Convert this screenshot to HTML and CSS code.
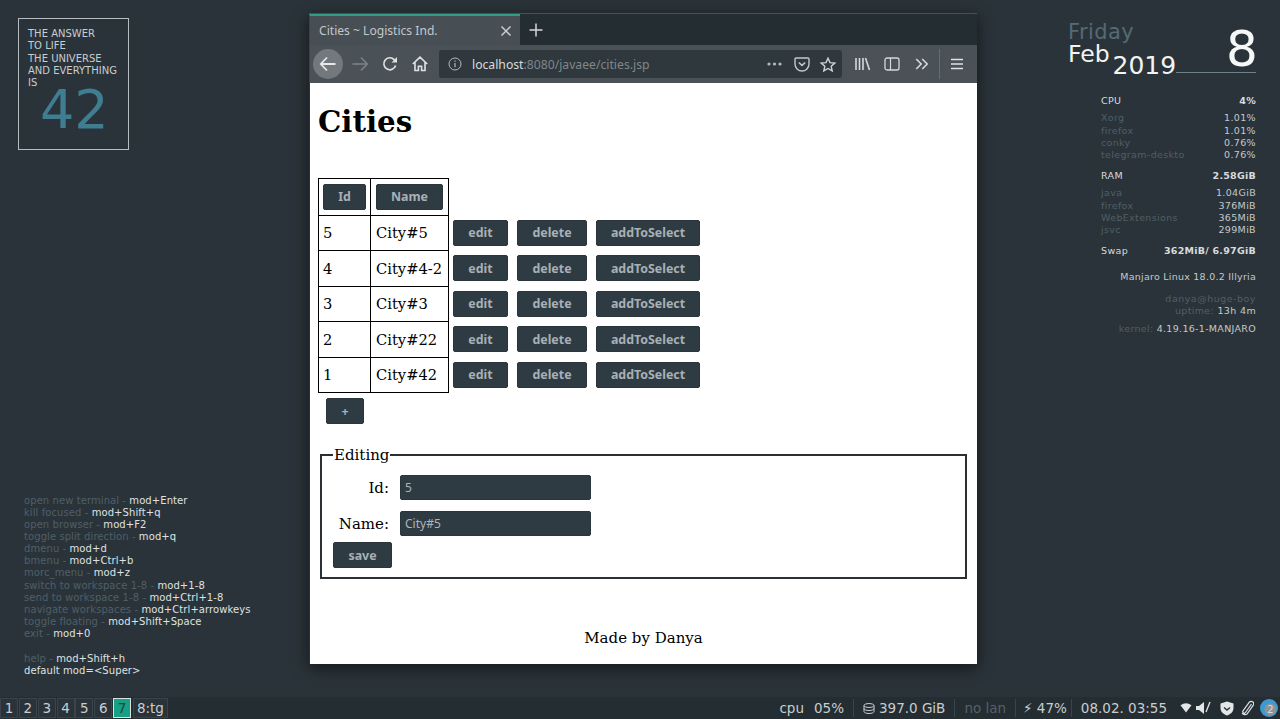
FILE: index.html
```html
<!doctype html>
<html>
<head>
<meta charset="utf-8">
<title>Cities ~ Logistics Ind.</title>
<link rel="stylesheet" href="styles.css">
</head>
<body>
<div class="answer">
	<div>THE ANSWER</div>
	<div>TO LIFE</div>
	<div>THE UNIVERSE</div>
	<div>AND EVERYTHING</div>
	<div>IS</div>
	<div class="answer-num">42</div>
</div>

<div class="keys">
	<div><span class="dim">open new terminal - </span>mod+Enter</div>
	<div><span class="dim">kill focused - </span>mod+Shift+q</div>
	<div><span class="dim">open browser - </span>mod+F2</div>
	<div><span class="dim">toggle split direction - </span>mod+q</div>
	<div><span class="dim">dmenu - </span>mod+d</div>
	<div><span class="dim">bmenu - </span>mod+Ctrl+b</div>
	<div><span class="dim">morc_menu - </span>mod+z</div>
	<div><span class="dim">switch to workspace 1-8 - </span>mod+1-8</div>
	<div><span class="dim">send to workspace 1-8 - </span>mod+Ctrl+1-8</div>
	<div><span class="dim">navigate workspaces - </span>mod+Ctrl+arrowkeys</div>
	<div><span class="dim">toggle floating - </span>mod+Shift+Space</div>
	<div><span class="dim">exit - </span>mod+0</div>
	<div class="keys-gap"><span class="dim">help - </span>mod+Shift+h</div>
	<div>default mod=&lt;Super&gt;</div>
</div>

<div class="window">
	<div class="tabbar">
		<div class="tab">
			<span class="tab-title">Cities ~ Logistics Ind.</span>
			<svg class="tab-close" width="12" height="12" viewBox="0 0 12 12"><path d="M1.5 1.5l9 9M10.5 1.5l-9 9" stroke="#c9cdd0" stroke-width="1.5" fill="none"/></svg>
		</div>
		<svg class="tab-new" width="14" height="14" viewBox="0 0 14 14"><path d="M7 0.5v13M0.5 7h13" stroke="#d5d8da" stroke-width="1.5" fill="none"/></svg>
	</div>
	<div class="toolbar">
		<div class="back">
			<svg width="18" height="16" viewBox="0 0 18 16"><path d="M16.5 8H2M8 1.5L1.8 8L8 14.5" stroke="#e6e8e9" stroke-width="1.8" fill="none"/></svg>
		</div>
		<svg class="tool-fwd" width="18" height="16" viewBox="0 0 18 16"><path d="M1.5 8H16M10 1.5L16.2 8L10 14.5" stroke="#7d8387" stroke-width="1.6" fill="none"/></svg>
		<svg class="tool-reload" width="16" height="16" viewBox="0 0 16 16"><path d="M13.6 9.5A6 6 0 1 1 12.2 3.6L14.2 5.4" stroke="#dfe2e3" stroke-width="1.7" fill="none"/><path d="M15 1v5.4H9.6z" fill="#dfe2e3"/></svg>
		<svg class="tool-home" width="16" height="16" viewBox="0 0 16 16"><path d="M0.8 8L8 1.2L15.2 8M3 6.5V14.5H6.4V10.2H9.6V14.5H13V6.5" stroke="#dfe2e3" stroke-width="1.6" fill="none"/></svg>
		<div class="urlbar">
			<svg class="url-info" width="14" height="14" viewBox="0 0 14 14"><circle cx="7" cy="7" r="6" stroke="#b4b9bc" stroke-width="1" fill="none"/><path d="M7 6v4.2M7 3.6v1.2" stroke="#b4b9bc" stroke-width="1.2"/></svg>
			<span class="url-text"><span class="url-host">localhost</span>:8080/javaee/cities.jsp</span>
			<svg class="url-dots" width="15" height="4" viewBox="0 0 15 4"><circle cx="2" cy="2" r="1.6" fill="#b4b9bc"/><circle cx="7.5" cy="2" r="1.6" fill="#b4b9bc"/><circle cx="13" cy="2" r="1.6" fill="#b4b9bc"/></svg>
			<svg class="url-pocket" width="16" height="15" viewBox="0 0 16 15"><path d="M2 1h12a1 1 0 0 1 1 1v5a7 7 0 0 1-14 0V2a1 1 0 0 1 1-1z" stroke="#c4c8ca" stroke-width="1.4" fill="none"/><path d="M4.8 5.5L8 8.4l3.2-2.9" stroke="#c4c8ca" stroke-width="1.6" fill="none"/></svg>
			<svg class="url-star" width="16" height="15" viewBox="0 0 16 15"><path d="M8 1.2l2 4.4 4.8.5-3.6 3.2 1 4.6L8 11.5l-4.2 2.4 1-4.6L1.2 6.1 6 5.6z" stroke="#d0d3d5" stroke-width="1.4" fill="none"/></svg>
		</div>
		<svg class="tool-lib" width="16" height="14" viewBox="0 0 16 14"><path d="M1 1v12M4.5 1v12M8 1v12M10.5 1l4 12" stroke="#d5d8da" stroke-width="1.6" fill="none"/></svg>
		<svg class="tool-side" width="16" height="14" viewBox="0 0 16 14"><rect x="1" y="1" width="14" height="12" rx="2" stroke="#d5d8da" stroke-width="1.3" fill="none"/><path d="M6.5 1v12" stroke="#d5d8da" stroke-width="1.2"/></svg>
		<svg class="tool-more" width="14" height="12" viewBox="0 0 14 12"><path d="M1.2 1l5 5-5 5M7.2 1l5 5-5 5" stroke="#d5d8da" stroke-width="1.6" fill="none"/></svg>
		<div class="tool-sep"></div>
		<svg class="tool-menu" width="12" height="12" viewBox="0 0 12 12"><path d="M0 1.5h12M0 6h12M0 10.5h12" stroke="#dfe2e3" stroke-width="1.5" fill="none"/></svg>
	</div>
	<div class="page">
		<h1>Cities</h1>
		<table class="cities">
			<tr class="head-row">
				<td class="cell-id"><button class="btn btn-id">Id</button></td>
				<td class="cell-name"><button class="btn btn-name">Name</button></td>
			</tr>
			<tr>
				<td class="cell-id">5</td><td class="cell-name">City#5</td>
				<td class="cell-actions"><button class="btn btn-edit">edit</button><button class="btn btn-delete">delete</button><button class="btn btn-add">addToSelect</button></td>
			</tr>
			<tr>
				<td class="cell-id">4</td><td class="cell-name">City#4-2</td>
				<td class="cell-actions"><button class="btn btn-edit">edit</button><button class="btn btn-delete">delete</button><button class="btn btn-add">addToSelect</button></td>
			</tr>
			<tr>
				<td class="cell-id">3</td><td class="cell-name">City#3</td>
				<td class="cell-actions"><button class="btn btn-edit">edit</button><button class="btn btn-delete">delete</button><button class="btn btn-add">addToSelect</button></td>
			</tr>
			<tr>
				<td class="cell-id">2</td><td class="cell-name">City#22</td>
				<td class="cell-actions"><button class="btn btn-edit">edit</button><button class="btn btn-delete">delete</button><button class="btn btn-add">addToSelect</button></td>
			</tr>
			<tr>
				<td class="cell-id">1</td><td class="cell-name">City#42</td>
				<td class="cell-actions"><button class="btn btn-edit">edit</button><button class="btn btn-delete">delete</button><button class="btn btn-add">addToSelect</button></td>
			</tr>
		</table>
		<button class="btn btn-plus">+</button>
		<fieldset class="editing">
			<legend>Editing</legend>
			<div class="field">
				<label>Id:</label>
				<input type="text" value="5">
			</div>
			<div class="field">
				<label>Name:</label>
				<input type="text" value="City#5">
			</div>
			<button class="btn btn-save">save</button>
		</fieldset>
		<div class="footer">Made by Danya</div>
	</div>
</div>

<div class="clock">
	<div class="clock-day">Friday</div>
	<div class="clock-month">Feb</div>
	<div class="clock-year">2019</div>
	<div class="clock-num">8</div>
	<div class="clock-line"></div>
</div>

<div class="conky">
	<div class="row head"><span>CPU</span><b>4%</b></div>
	<div class="block">
		<div class="row"><span class="dim">Xorg</span><span>1.01%</span></div>
		<div class="row"><span class="dim">firefox</span><span>1.01%</span></div>
		<div class="row"><span class="dim">conky</span><span>0.76%</span></div>
		<div class="row"><span class="dim">telegram-deskto</span><span>0.76%</span></div>
	</div>
	<div class="row head"><span>RAM</span><b>2.58GiB</b></div>
	<div class="block">
		<div class="row"><span class="dim">java</span><span>1.04GiB</span></div>
		<div class="row"><span class="dim">firefox</span><span>376MiB</span></div>
		<div class="row"><span class="dim">WebExtensions</span><span>365MiB</span></div>
		<div class="row"><span class="dim">jsvc</span><span>299MiB</span></div>
	</div>
	<div class="row head"><span>Swap</span><b>362MiB/ 6.97GiB</b></div>
	<div class="sys">Manjaro Linux 18.0.2 Illyria</div>
	<div class="host dim">danya@huge-boy</div>
	<div class="uptime"><span class="dim">uptime:</span> 13h 4m</div>
	<div class="kernel"><span class="dim">kernel:</span> 4.19.16-1-MANJARO</div>
</div>

<div class="bar">
	<div class="workspaces">
		<span class="ws">1</span><span class="ws">2</span><span class="ws">3</span><span class="ws">4</span><span class="ws">5</span><span class="ws">6</span><span class="ws ws-on">7</span><span class="ws ws-wide">8:tg</span>
	</div>
	<div class="status">
		<span class="st st-cpu"><span>cpu</span><span>05%</span></span>
		<span class="st st-disk"><svg width="12" height="11" viewBox="0 0 12 11"><ellipse cx="6" cy="2.5" rx="5" ry="2" stroke="#c9cdd0" fill="none"/><path d="M1 2.5v6c0 1.1 2.2 2 5 2s5-.9 5-2v-6M1 5.5c0 1.1 2.2 2 5 2s5-.9 5-2" stroke="#c9cdd0" fill="none"/></svg>397.0 GiB</span>
		<span class="st st-off">no lan</span>
		<span class="st st-bat">⚡ 47%</span>
		<span class="st st-time">08.02. 03:55</span>
		<div class="tray">
			<svg width="12" height="10" viewBox="0 0 12 10"><path d="M0.5 2.2Q6-1.6 11.5 2.2L6 9.5z" fill="#e4e6e7"/></svg>
			<svg class="tray-mute" width="16" height="14" viewBox="0 0 16 14"><path d="M1 5h3l5-4v12l-5-4H1z" fill="#e4e6e7"/><path d="M11 11L15 1" stroke="#e4e6e7" stroke-width="1.3"/></svg>
			<svg class="tray-shield" width="14" height="15" viewBox="0 0 14 15"><path d="M7 0.5L13.5 2.5V7c0 3.6-2.8 6.4-6.5 7.5C3.3 13.4.5 10.6.5 7V2.5z" fill="#e4e6e7"/><path d="M4 6.5l3 2.5 3-2.5" stroke="#2a3338" stroke-width="1.4" fill="none"/></svg>
			<svg class="tray-clip" width="13" height="16" viewBox="0 0 13 16"><path d="M10.5 4L4.5 12.5a1.5 1.5 0 0 1-2.5-1.7L8.5 2a2.5 2.5 0 0 1 4 2.8L6 14a3.6 3.6 0 0 1-5-1" stroke="#dfe2e3" stroke-width="1.2" fill="none"/></svg>
			<svg class="tray-tg" width="18" height="18" viewBox="0 0 18 18"><circle cx="9" cy="9" r="9" fill="#3d9ad1"/><circle cx="10.5" cy="10.5" r="6" fill="#8c9499"/><text x="10.5" y="13.5" class="tray-num" text-anchor="middle">2</text></svg>
		</div>
	</div>
</div>
</body>
</html>
```

FILE: styles.css
```css
html, body {
	margin: 0;
	height: 100%;
}
body {
	position: relative;
	overflow: hidden;
	background: #2a3339;
	color: #e8eaeb;
	font-family: "DejaVu Sans", sans-serif;
}
.dim {
	color: #4f5f68;
}

/* desktop widgets */
.answer {
	position: absolute;
	left: 18px;
	top: 18px;
	padding: 9px 0 0 9px;
	width: 100px;
	height: 121px;
	border: 1px solid #b4bcc0;
	font-size: 10px;
	line-height: 12.3px;
	color: #c8cdd0;
}
.answer-num {
	margin: -6px 0 0 12px;
	font-size: 54px;
	line-height: 54px;
	color: #3f7d90;
}
.keys {
	position: absolute;
	left: 24px;
	top: 494.5px;
	font-size: 10px;
	line-height: 12.15px;
	letter-spacing: 0.08px;
	color: #dfe2e3;
}
.keys-gap {
	margin-top: 12.15px;
}
.clock div {
	position: absolute;
}
.clock-day {
	left: 1068px;
	top: 21px;
	font-size: 21px;
	line-height: 22px;
	letter-spacing: 0.4px;
	color: #566a75;
}
.clock-month {
	left: 1068px;
	top: 44px;
	font-size: 23.5px;
	line-height: 20px;
	color: #f2f3f4;
}
.clock-year {
	left: 1112.5px;
	top: 51px;
	font-size: 25px;
	line-height: 29px;
	color: #f2f3f4;
}
.clock-num {
	left: 1226px;
	top: 20px;
	font-size: 50px;
	line-height: 58px;
	color: #f6f7f7;
}
.clock-line {
	left: 1176px;
	top: 72px;
	width: 80px;
	height: 1px;
	background: #6d7f89;
}
.conky {
	position: absolute;
	left: 1101px;
	top: 95.2px;
	width: 155px;
	font-size: 9.5px;
	line-height: 12.2px;
	letter-spacing: 0.35px;
	color: #c4c9cc;
}
.conky .row {
	display: flex;
	justify-content: space-between;
}
.conky .head {
	color: #d8dbdd;
}
.conky b {
	letter-spacing: 0.25px;
}
.block {
	margin: 5px 0 9px;
}
.sys {
	margin-top: 14px;
	text-align: right;
	letter-spacing: 0.24px;
}
.host {
	margin-top: 9.5px;
	text-align: right;
	letter-spacing: 0.5px;
}
.uptime {
	text-align: right;
}
.kernel {
	margin-top: 5px;
	text-align: right;
	letter-spacing: 0.3px;
}

/* browser */
.window {
	position: absolute;
	left: 309px;
	top: 13px;
	width: 668px;
	height: 650px;
	display: flex;
	flex-direction: column;
	box-shadow: 0 4px 14px rgba(0,0,0,.55);
	border-top: 1px solid #46525a;
}
.tabbar {
	display: flex;
	align-items: center;
	height: 31px;
	background: #242d32;
	flex: none;
}
.tab {
	display: flex;
	align-items: center;
	box-sizing: border-box;
	width: 211px;
	height: 31px;
	padding: 0 10px 0 9px;
	background: #474f55;
	border-top: 2px solid #2f9c88;
	border-left: 1px solid #3a4349;
}
.tab-title {
	flex: 1;
	font: 12.1px "Noto Sans", sans-serif;
	color: #c3c7ca;
}
.tab-close {
	margin-right: -2px;
}
.tab-new {
	margin-left: 9px;
}
.toolbar {
	display: flex;
	align-items: center;
	height: 38px;
	flex: none;
	background: #4a5157;
	border-left: 1px solid #3a4349;
	box-sizing: border-box;
}
.back {
	display: flex;
	align-items: center;
	justify-content: center;
	width: 30px;
	height: 30px;
	margin-left: 3px;
	border-radius: 50%;
	background: #72787c;
	flex: none;
}
.tool-fwd { margin-left: 8px; }
.tool-reload { margin-left: 13px; }
.tool-home { margin-left: 14px; }
.urlbar {
	display: flex;
	align-items: center;
	box-sizing: border-box;
	width: 403px;
	height: 28px;
	margin-left: 11px;
	padding: 0 6px 0 9px;
	background: #2f383d;
	border-radius: 3px;
}
.url-text {
	flex: 1;
	margin-left: 10px;
	font: 12.2px "Noto Sans", sans-serif;
	color: #80878b;
}
.url-host {
	color: #d8dbdd;
}
.url-dots { margin-right: 1px; }
.url-pocket { margin-left: 11px; }
.url-star { margin-left: 10px; }
.tool-lib { margin-left: 13px; }
.tool-side { margin-left: 13px; }
.tool-more { margin-left: 15px; }
.tool-sep {
	width: 1px;
	height: 30px;
	margin-left: 10px;
	background: #666d72;
}
.tool-menu { margin-left: 11px; }

/* page */
.page {
	flex: 1;
	background: #fff;
	padding: 0 8px;
	margin-left: 1px;
	color: #000;
	font-family: "DejaVu Serif", serif;
	font-size: 15px;
}
.page h1 {
	margin: 20px 0 38px;
	font-size: 29.3px;
	line-height: 37px;
}
.btn {
	box-sizing: border-box;
	height: 26px;
	padding: 0;
	border: 1px solid #2b353c;
	border-radius: 2px;
	background: #2f3b43;
	color: #a8b0b5;
	font: bold 12.4px "Noto Sans", sans-serif;
}
.cities {
	border-collapse: collapse;
	font-size: 14.7px;
}
.cities tr {
	height: 35.5px;
}
.cities .head-row {
	height: 36.5px;
}
.cell-id, .cell-name {
	border: 1px solid #000;
	padding: 0 4px;
	white-space: nowrap;
}
.cell-id {
	width: 43px;
}
.cell-name {
	width: 68px;
	padding-left: 5px;
}
.cell-actions {
	padding: 0 0 0 4px;
	white-space: nowrap;
	line-height: 0;
}
.btn-id { width: 43px; display: block; }
.btn-name { width: 67px; display: block; }
.btn-edit { width: 55px; margin-right: 9px; }
.btn-delete { width: 70px; margin-right: 9px; }
.btn-add { width: 104px; }
.btn-plus {
	display: block;
	width: 38px;
	margin: 5px 0 0 8px;
}
.editing {
	box-sizing: border-box;
	width: 647px;
	height: 135px;
	margin: 20px 0 0 2px;
	padding: 10px 0 0 11px;
	border: 2px solid #2b3034;
}
.editing legend {
	padding: 2px 1px 0;
	margin-left: 0;
	line-height: 19px;
}
.field {
	display: flex;
	align-items: center;
	height: 25px;
	margin-bottom: 11px;
}
.field label {
	width: 56px;
	margin-right: 11px;
	text-align: right;
}
.field input {
	box-sizing: border-box;
	width: 191px;
	height: 25px;
	padding: 0 4px;
	border: 1px solid #2b353c;
	border-radius: 2px;
	background: #2f3b43;
	color: #aeb5b9;
	font: 12px "Noto Sans", sans-serif;
}
.btn-save {
	display: block;
	width: 59px;
	margin-top: -5px;
}
.footer {
	margin-top: 50px;
	text-align: center;
	line-height: 19px;
}

/* status bar */
.bar {
	position: absolute;
	left: 0;
	right: 0;
	bottom: 0;
	height: 22px;
	display: flex;
	align-items: center;
	justify-content: space-between;
	background: #242d32;
	font-size: 13.5px;
	color: #c9cdd0;
}
.workspaces {
	display: flex;
	gap: 0.85px;
}
.ws {
	box-sizing: border-box;
	width: 18px;
	height: 20px;
	line-height: 18px;
	text-align: center;
	border: 1px solid #3a444a;
	background: #2a3339;
}
.ws-on {
	background: #16a085;
	border-color: #dfe2e3;
	color: #24413d;
}
.ws-wide {
	width: 35px;
	margin-left: 1px;
}
.status {
	display: flex;
	align-items: center;
}
.st {
	display: flex;
	align-items: center;
	gap: 4px;
	height: 18px;
	padding: 0 9px;
	white-space: pre;
	border-right: 1px solid #3a444a;
}
.st-cpu {
	gap: 10px;
}
.st-off {
	color: #566169;
}
.st-bat {
	padding: 0 4px 0 7px;
}
.st-time {
	border-right: 0;
}
.tray {
	display: flex;
	align-items: center;
	margin: 0 2px 0 4px;
}
.tray-mute { margin-left: 3px; }
.tray-shield { margin-left: 9px; }
.tray-clip { margin-left: 7px; }
.tray-tg { margin-left: 6px; }
.tray-num {
	font-size: 10px;
	fill: #d8dbdd;
}
```
